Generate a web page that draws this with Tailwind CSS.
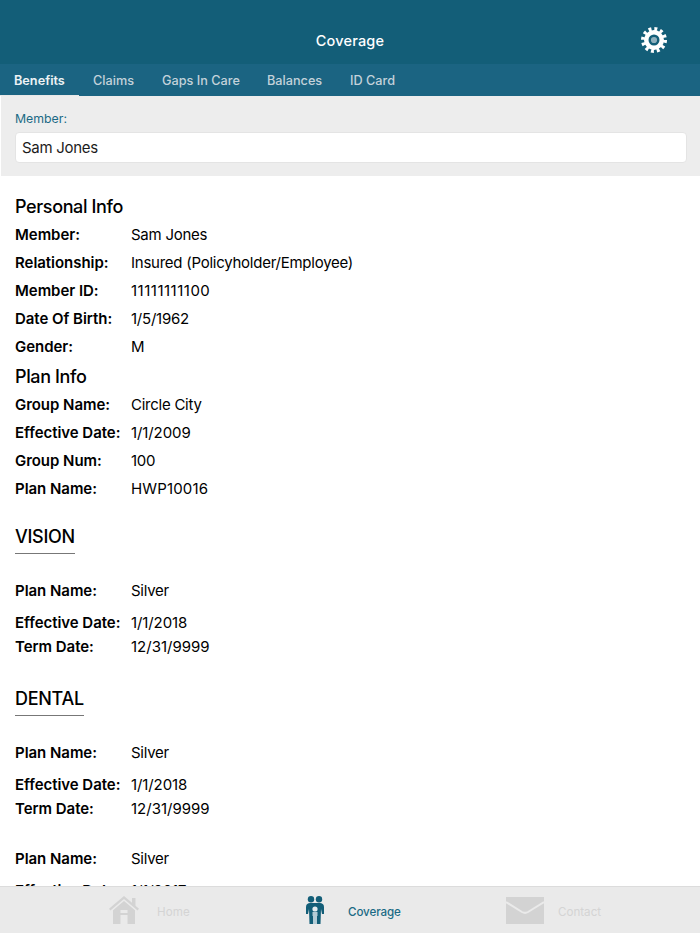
<!DOCTYPE html>
<html>
<head>
<meta charset="utf-8">
<script src="https://cdn.jsdelivr.net/npm/@tailwindcss/browser@4"></script>
</head>
<body class="bg-white">
<div class="w-[700px] h-[933px] flex flex-col overflow-hidden font-['Inter','Liberation_Sans',sans-serif] text-black">
  <header class="relative h-[64px] shrink-0 bg-[#135e78] flex items-center justify-center pt-[18px]">
    <span class="text-[14.5px] font-medium text-white tracking-[0.2px]">Coverage</span>
    <svg class="absolute left-[641px] top-[27px] w-[26px] h-[26px]" viewBox="0 0 26 26">
      <circle cx="13" cy="13" r="10" fill="#fff"/>
      <circle cx="13" cy="13" r="11" fill="none" stroke="#fff" stroke-width="4" stroke-dasharray="2.88 2.88"/>
      <circle cx="13" cy="13" r="4.300" fill="#8fb0bd" stroke="#135e78" stroke-width="2.400"/>
    </svg>
  </header>
  <nav class="h-[32px] shrink-0 bg-[#1b6482] flex text-[12.7px] font-medium text-[#c3d2da] pt-[1px]">
    <div class="w-[79px] pl-[14px] flex items-center text-[#eef3f5] font-semibold relative">Benefits<span class="absolute left-0 right-0 bottom-0 h-px bg-[#e8e8e8]"></span></div>
    <div class="w-[83px] pl-[14px] flex items-center">Claims</div>
    <div class="w-[105px] flex items-center">Gaps In Care</div>
    <div class="w-[83px] flex items-center">Balances</div>
    <div class="flex items-center">ID Card</div>
  </nav>
  <section class="h-[80px] shrink-0 ml-px bg-[#ededed] pl-[14px] pr-[13px] pt-[15px]">
    <div class="text-[12.3px] leading-[16px] text-[#1a6a85]">Member:</div>
    <div class="mt-[5px] h-[31px] bg-white border border-[#e4e4e4] rounded-[4px] pl-[6px] pt-[1px] flex items-center text-[15px] tracking-[-0.3px] text-[#1c1c1c]">Sam Jones</div>
  </section>
  <main class="flex-1 min-h-0 overflow-hidden px-[15px] pt-[17px] text-[15px] leading-[24px] tracking-[-0.25px]">
    <h2 class="text-[18px] font-medium leading-[28px] tracking-[-0.38px]">Personal Info</h2>
    <div class="grid grid-cols-[116px_1fr] auto-rows-[28px] items-center">
      <b class="font-semibold tracking-[-0.04px]">Member:</b><span>Sam Jones</span>
      <b class="font-semibold tracking-[-0.04px]">Relationship:</b><span>Insured (Policyholder/Employee)</span>
      <b class="font-semibold tracking-[-0.04px]">Member ID:</b><span class="tracking-[0.5px]">11111111100</span>
      <b class="font-semibold tracking-[-0.04px]">Date Of Birth:</b><span>1/5/1962</span>
      <b class="font-semibold tracking-[-0.04px]">Gender:</b><span>M</span>
    </div>
    <h2 class="h-[30px] text-[18px] font-medium leading-[32px] tracking-[-0.38px]">Plan Info</h2>
    <div class="grid grid-cols-[116px_1fr] auto-rows-[28px] items-center">
      <b class="font-semibold tracking-[-0.04px]">Group Name:</b><span>Circle City</span>
      <b class="font-semibold tracking-[-0.04px]">Effective Date:</b><span class="tracking-[-0.1px]">1/1/2009</span>
      <b class="font-semibold tracking-[-0.04px]">Group Num:</b><span>100</span>
      <b class="font-semibold tracking-[-0.04px]">Plan Name:</b><span class="tracking-[0.15px]">HWP10016</span>
    </div>
    <h2 class="mt-[20px] w-fit pb-[2px] border-b-[1.5px] border-[#777] text-[18px] font-medium leading-[28px] tracking-[-0.3px]">VISION</h2>
    <div class="mt-[25px] grid grid-cols-[116px_1fr] grid-rows-[32px_24px_24px]">
      <b class="font-semibold tracking-[-0.04px]">Plan Name:</b><span>Silver</span>
      <b class="font-semibold tracking-[-0.04px]">Effective Date:</b><span class="tracking-[-0.1px]">1/1/2018</span>
      <b class="font-semibold tracking-[-0.04px]">Term Date:</b><span class="tracking-[0px]">12/31/9999</span>
    </div>
    <h2 class="mt-[26px] w-fit pb-[2px] border-b-[1.5px] border-[#777] text-[18px] font-medium leading-[28px] tracking-[-0.3px]">DENTAL</h2>
    <div class="mt-[25px] grid grid-cols-[116px_1fr] grid-rows-[32px_24px_24px]">
      <b class="font-semibold tracking-[-0.04px]">Plan Name:</b><span>Silver</span>
      <b class="font-semibold tracking-[-0.04px]">Effective Date:</b><span class="tracking-[-0.1px]">1/1/2018</span>
      <b class="font-semibold tracking-[-0.04px]">Term Date:</b><span class="tracking-[0px]">12/31/9999</span>
    </div>
    <div class="mt-[26px] grid grid-cols-[116px_1fr] grid-rows-[32px_24px]">
      <b class="font-semibold tracking-[-0.04px]">Plan Name:</b><span>Silver</span>
      <b class="font-semibold tracking-[-0.04px]">Effective Date:</b><span class="tracking-[-0.1px]">1/1/2017</span>
    </div>
  </main>
  <footer class="h-[47px] shrink-0 bg-[#eaeaea] border-t border-[#dcdcdc] flex text-[11.6px]">
    <div class="w-[233px] flex items-center pl-[109px] text-[#d4d4d4]">
      <svg class="w-[30px] h-[28px]" viewBox="0 0 30 28" fill="#d3d3d3"><path d="M15 0 23 6.800V2h3.500v7.800L30 12.800l-1.400 1.600L15 3 1.400 14.400 0 12.800z"/><path fill-rule="evenodd" d="M15 5 26 14.200V28H18.500V19h-7v9H4V14.200zM11.500 14v3h7v-3z"/></svg>
      <span class="ml-[18px] pt-[5px] tracking-[0.1px]">Home</span>
    </div>
    <div class="w-[234px] flex items-center pl-[73px] text-[#1b6a85]">
      <svg class="w-[18px] h-[28px]" viewBox="0 0 18 28"><circle cx="5" cy="3.200" r="3.200" fill="#135e78"/><circle cx="13" cy="3.200" r="3.200" fill="#135e78"/><path d="M0 11c0-3 2-4 4-4h10c2 0 4 1 4 4v7h-2l-1-5-.500 15h-11L3 13l-1 5H0z" fill="#135e78"/><circle cx="9" cy="13" r="2.600" fill="#e4ecef"/><path d="M6.500 16h5v4h-.500v8H7v-8h-.500z" fill="#b4ccd6"/></svg>
      <span class="ml-[24px] pt-[5px] font-medium tracking-[-0.1px]">Coverage</span>
    </div>
    <div class="flex items-center pl-[39px] text-[#d4d4d4]">
      <svg class="w-[38px] h-[27px]" viewBox="0 0 38 27"><rect width="38" height="27" fill="#d3d3d3"/><path d="M0 5l16 10a6 6 0 0 0 6 0L38 5" fill="none" stroke="#eaeaea" stroke-width="2"/></svg>
      <span class="ml-[14px] pt-[5px]">Contact</span>
    </div>
  </footer>
</div>
</body>
</html>
